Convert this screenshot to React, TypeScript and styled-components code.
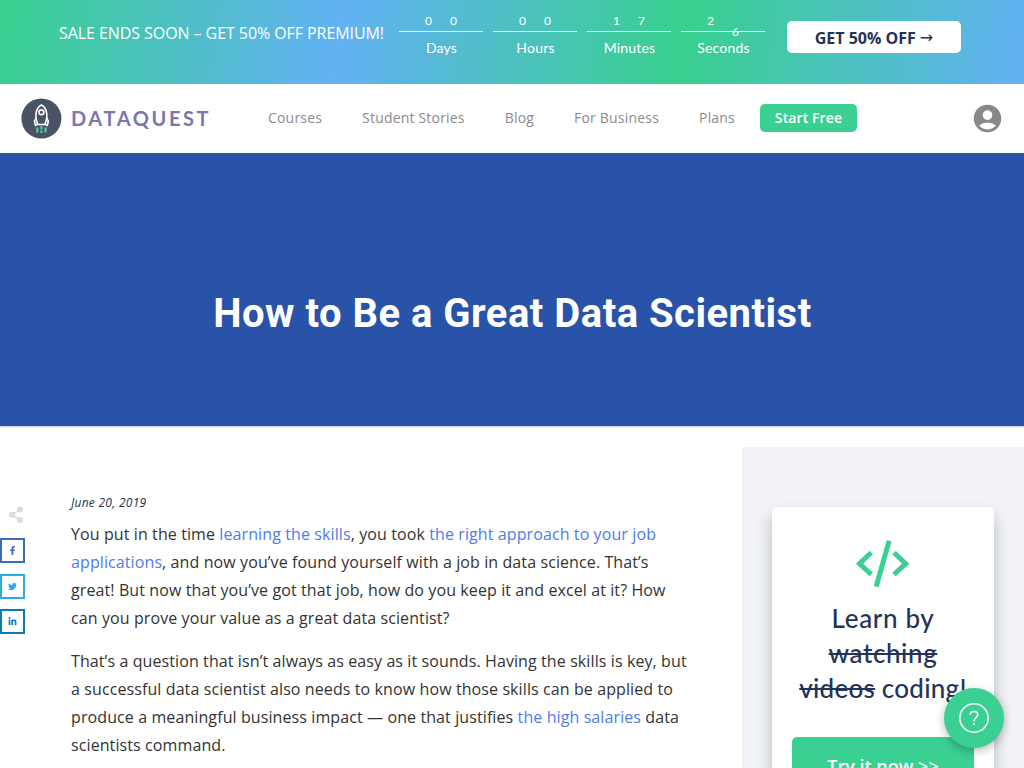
import React from 'react';
import styled, { createGlobalStyle } from 'styled-components';
import { FaFacebookF, FaTwitter, FaLinkedinIn } from 'react-icons/fa';
import { MdAccountCircle } from 'react-icons/md';

const GlobalStyle = createGlobalStyle`
  * { box-sizing: border-box; }
  html, body { margin: 0; height: 768px; overflow: hidden; background: #fff; }
  body { font-family: 'Open Sans', 'Liberation Sans', sans-serif; }
`;

const Page = styled.div`
  position: relative;
  width: 1024px;
  height: 768px;
  overflow: hidden;
`;

const Banner = styled.div`
  display: flex;
  align-items: flex-start;
  height: 84px;
  padding: 0 63px 0 59px;
  color: #fff;
  background: linear-gradient(98deg, #38d08e 0%, #62b1f4 33.3%, #38d08e 66.6%, #62b1f4 100%);
`;

const BannerText = styled.div`
  width: 340px;
  padding-top: 22px;
  font-size: 16px;
  line-height: 22px;
  letter-spacing: -0.07px;
  white-space: nowrap;
`;

const Countdown = styled.div`
  display: flex;
  gap: 10px;
  font-family: Lato, 'Open Sans', sans-serif;
`;

const Unit = styled.div`
  width: 84px;
  text-align: center;
`;

const Digits = styled.div`
  display: flex;
  justify-content: center;
  height: 32px;
  padding-top: 13px;
  border-bottom: 1px solid rgba(255, 255, 255, 0.85);
`;

const Digit = styled.span<{ $drop?: boolean }>`
  width: 25px;
  height: 15px;
  font-size: 12px;
  line-height: 15px;
  transform: translateY(${(p) => (p.$drop ? 11 : 0)}px);
`;

const UnitLabel = styled.div`
  padding: 7px 0 0 1px;
  font-size: 14px;
  line-height: 18px;
  letter-spacing: 0.2px;
`;

const OfferButton = styled.button`
  display: flex;
  align-items: center;
  justify-content: center;
  gap: 4px;
  width: 174px;
  height: 32px;
  margin: 21px 0 0 22px;
  padding: 2px 0 0;
  border: 0;
  border-radius: 5px;
  background: #fff;
  color: #253358;
  font: 700 16px/30px 'Open Sans', sans-serif;
  white-space: nowrap;
`;

const Arrow = styled.span`
  font: 400 16px/30px 'DejaVu Sans', sans-serif;
`;

const Header = styled.header`
  display: flex;
  align-items: center;
  height: 69px;
  padding: 0 23px 1px 21px;
  background: #fff;
`;

const Logo = styled.div`
  display: flex;
  align-items: center;
  width: 247px;
`;

const Wordmark = styled.span`
  margin-left: 9px;
  color: #7a77ad;
  font: 700 20px/24px Lato, sans-serif;
  letter-spacing: 2.6px;
`;

const Nav = styled.nav`
  display: flex;
  align-items: center;
  gap: 40px;
  flex: 1;
`;

const NavLink = styled.a`
  color: #8b8b8d;
  font-size: 14px;
  line-height: 20px;
  letter-spacing: 0.19px;
  white-space: nowrap;
`;

const StartButton = styled.button`
  width: 97px;
  height: 28px;
  margin-left: -15px;
  padding: 0;
  border: 0;
  border-radius: 5px;
  background: #3ad092;
  color: #fff;
  font: 600 14px/28px 'Open Sans', sans-serif;
  letter-spacing: 0.1px;
`;

const AccountIcon = styled(MdAccountCircle)`
  width: 33px;
  height: 33px;
  margin-right: -3px;
  color: #88888c;
`;

const Hero = styled.section`
  display: flex;
  align-items: center;
  justify-content: center;
  height: 273px;
  padding: 48px 0 0 1px;
  background: #2953a8;
  box-shadow: 0 1px 1px rgba(0, 0, 0, 0.16);
`;

const Title = styled.h1`
  margin: 0;
  color: #fff;
  font: 700 40px/48px Roboto, 'Open Sans', sans-serif;
  letter-spacing: 0.49px;
  white-space: nowrap;
`;

const Content = styled.div`
  display: flex;
  height: 342px;
`;

const ShareBar = styled.aside`
  display: flex;
  flex-direction: column;
  width: 71px;
  padding-top: 80px;
`;

const ShareMark = styled.svg`
  width: 16px;
  height: 17px;
  margin: 0 0 15px 8px;
`;

const ShareButton = styled.a<{ $color: string }>`
  display: flex;
  align-items: center;
  justify-content: center;
  width: 25px;
  height: 25px;
  margin-bottom: 10.5px;
  border: 2px solid ${(p) => p.$color};
  color: ${(p) => p.$color};
  font-size: 9px;
`;

const Article = styled.article`
  width: 671px;
  padding-top: 67px;
  color: #333;
  white-space: nowrap;
`;

const PostDate = styled.div`
  color: #263050;
  font-size: 12px;
  font-style: italic;
  line-height: 20px;
  letter-spacing: 0.27px;
`;

const Paragraph = styled.p`
  margin: 7px 0 15px;
  font-size: 16px;
  line-height: 28px;
  letter-spacing: 0.1px;

  & + & { margin-top: 0; }
`;

const TextLink = styled.a`
  color: #4f7bed;
`;

const Sidebar = styled.aside`
  width: 282px;
  height: 321px;
  margin-top: 21px;
  padding: 60px 30px 0;
  overflow: hidden;
  background: #f1f3f7;
`;

const PromoCard = styled.div`
  display: flex;
  flex-direction: column;
  align-items: center;
  height: 400px;
  padding: 33px 20px 0;
  border-radius: 5px;
  background: #fff;
  box-shadow: 0 9px 16px rgba(20, 25, 50, 0.26);
`;

const PromoTitle = styled.h2`
  margin: 13px 0 31px;
  color: #253358;
  font: 500 26px/35px Lato, 'Open Sans', sans-serif;
  text-align: center;
  white-space: nowrap;
`;

const PromoLine = styled.span<{ $spacing: number }>`
  display: block;
  letter-spacing: ${(p) => p.$spacing}px;
`;

const TryButton = styled.button`
  flex-shrink: 0;
  width: 182px;
  height: 60px;
  padding: 0 0 2px;
  border: 0;
  border-radius: 5px;
  background: #3ad092;
  color: #fff;
  font: 600 18px/58px 'Open Sans', sans-serif;
`;

const HelpButton = styled.button`
  position: absolute;
  right: 20px;
  bottom: 20px;
  display: flex;
  align-items: center;
  justify-content: center;
  width: 60px;
  height: 60px;
  padding: 0;
  border: 0;
  border-radius: 50%;
  background: #3ad092;
  box-shadow: 0 3px 10px rgba(0, 0, 0, 0.28);
`;

const units = [
  { label: 'Days', digits: ['0', '0'] },
  { label: 'Hours', digits: ['0', '0'] },
  { label: 'Minutes', digits: ['1', '7'] },
  { label: 'Seconds', digits: ['2', '6'] },
];

const links = ['Courses', 'Student Stories', 'Blog', 'For Business', 'Plans'];

const Rocket = () => (
  <svg width="41" height="41" viewBox="0 0 41 41">
    <circle cx="20.4" cy="20.5" r="20" fill="#4a5266" />
    <g fill="none" stroke="#fff" strokeWidth="1.6" strokeLinejoin="round">
      <path d="M17 26.5 C13 18 15.2 9.5 20.4 7 C25.6 9.5 27.8 18 23.8 26.5 Z" />
      <circle cx="20.4" cy="14.3" r="2.4" />
      <path d="M15.4 19.5 L13.5 23.2 L14.5 27.5 L17.3 25.6 M25.4 19.5 L27.3 23.2 L26.3 27.5 L23.5 25.6" />
    </g>
    <path d="M16.3 29.5v5M20.4 28v3.4M20.4 32.5v2.5M24.5 29.5v5" stroke="#4fd09a" strokeWidth="2.1" />
  </svg>
);

export default function App() {
  return (
    <Page>
      <GlobalStyle />
      <Banner>
        <BannerText>SALE ENDS SOON – GET 50% OFF PREMIUM!</BannerText>
        <Countdown>
          {units.map((unit) => (
            <Unit key={unit.label}>
              <Digits>
                {unit.digits.map((digit, i) => (
                  <Digit key={i} $drop={digit === '6'}>{digit}</Digit>
                ))}
              </Digits>
              <UnitLabel>{unit.label}</UnitLabel>
            </Unit>
          ))}
        </Countdown>
        <OfferButton>GET 50% OFF <Arrow>→</Arrow></OfferButton>
      </Banner>
      <Header>
        <Logo>
          <Rocket />
          <Wordmark>DATAQUEST</Wordmark>
        </Logo>
        <Nav>
          {links.map((link) => (
            <NavLink key={link}>{link}</NavLink>
          ))}
          <StartButton>Start Free</StartButton>
        </Nav>
        <AccountIcon />
      </Header>
      <Hero>
        <Title>How to Be a Great Data Scientist</Title>
      </Hero>
      <Content>
        <ShareBar>
          <ShareMark viewBox="0 0 16 17" fill="#dcdcdc">
            <circle cx="12" cy="3.5" r="3" />
            <circle cx="4" cy="8.8" r="3" />
            <circle cx="12" cy="14" r="3" />
            <path d="M12 3.5 L4 8.8 L12 14" fill="none" stroke="#dcdcdc" strokeWidth="1.8" />
          </ShareMark>
          <ShareButton $color="#3a6cb7"><FaFacebookF /></ShareButton>
          <ShareButton $color="#2daae1"><FaTwitter /></ShareButton>
          <ShareButton $color="#0a7bb8"><FaLinkedinIn /></ShareButton>
        </ShareBar>
        <Article>
          <PostDate>June 20, 2019</PostDate>
          <Paragraph>
            You put in the time <TextLink>learning the skills</TextLink>, you took <TextLink>the right approach to your job<br />
            applications</TextLink>, and now you’ve found yourself with a job in data science. That’s<br />
            great! But now that you’ve got that job, how do you keep it and excel at it? How<br />
            can you prove your value as a great data scientist?
          </Paragraph>
          <Paragraph>
            That’s a question that isn’t always as easy as it sounds. Having the skills is key, but<br />
            a successful data scientist also needs to know how those skills can be applied to<br />
            produce a meaningful business impact — one that justifies <TextLink>the high salaries</TextLink> data<br />
            scientists command.
          </Paragraph>
        </Article>
        <Sidebar>
          <PromoCard>
            <svg width="54" height="48" viewBox="0 0 54 48" fill="none" stroke="#3ad092" strokeWidth="5">
              <path d="M15.2 12.5 L3.5 23.7 L15.2 34.5 M38 12.5 L49.7 23.7 L38 34.5 M33.2 .8 L20.2 46.5" />
            </svg>
            <PromoTitle>
              <PromoLine $spacing={0.65}>Learn by</PromoLine>
              <PromoLine $spacing={0.6}><s>watching</s></PromoLine>
              <PromoLine $spacing={0.25}><s>videos</s> coding!</PromoLine>
            </PromoTitle>
            <TryButton>Try it now &gt;&gt;</TryButton>
          </PromoCard>
        </Sidebar>
      </Content>
      <HelpButton aria-label="Help">
        <svg width="30" height="30" viewBox="0 0 30 30" fill="none" stroke="#fff">
          <circle cx="15" cy="15" r="14.2" strokeWidth="1.6" />
          <path d="M11.2 11.8 C11.2 7.4 18.8 7.4 18.8 11.8 C18.8 14.3 15 14.8 15 18.4" strokeWidth="1.5" />
          <path d="M15 20.2v1.8" strokeWidth="1.7" />
        </svg>
      </HelpButton>
    </Page>
  );
}
